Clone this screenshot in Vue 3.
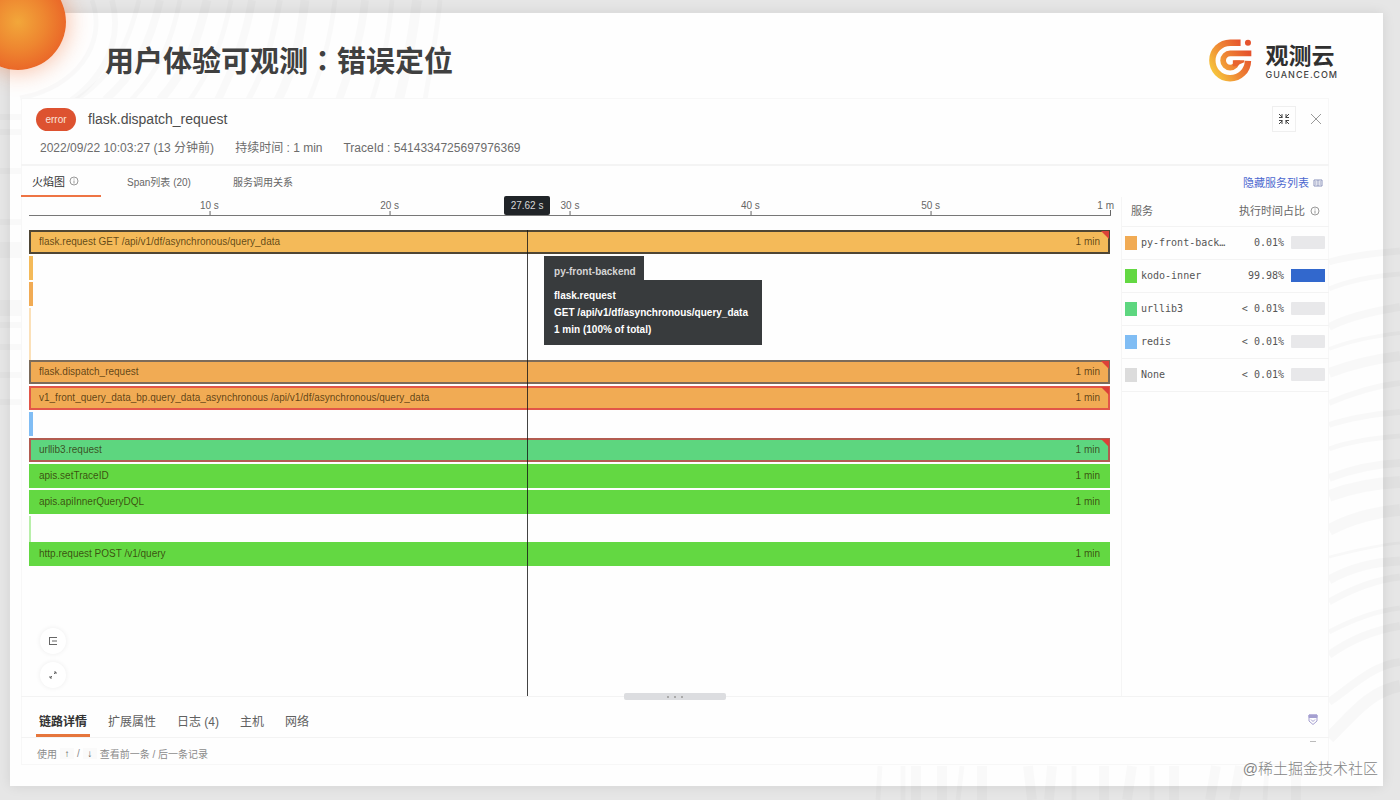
<script setup>
import { ref } from 'vue'

const ticks = [
  { label: '10 s', at: 16.67 },
  { label: '20 s', at: 33.33 },
  { label: '30 s', at: 50 },
  { label: '40 s', at: 66.67 },
  { label: '50 s', at: 83.33 },
]

const cursor = 46.03

const spans = [
  { name: 'flask.request GET /api/v1/df/asynchronous/query_data', kind: 'amber', edge: 'dark', error: true },
  { kind: 'amber', sliver: true },
  { kind: 'orange', sliver: true },
  { kind: 'pale', sliver: true },
  { kind: 'pale', sliver: true },
  { name: 'flask.dispatch_request', kind: 'orange', edge: 'grey', error: true },
  { name: 'v1_front_query_data_bp.query_data_asynchronous /api/v1/df/asynchronous/query_data', kind: 'orange', edge: 'red', error: true },
  { kind: 'blue', sliver: true },
  { name: 'urllib3.request', kind: 'mint', edge: 'red', error: true },
  { name: 'apis.setTraceID', kind: 'green' },
  { name: 'apis.apiInnerQueryDQL', kind: 'green' },
  { kind: 'lime', sliver: true },
  { name: 'http.request POST /v1/query', kind: 'green' },
]

const services = [
  { name: 'py-front-back…', kind: 'orange', share: '0.01%', fill: 0 },
  { name: 'kodo-inner', kind: 'green', share: '99.98%', fill: 100 },
  { name: 'urllib3', kind: 'mint', share: '< 0.01%', fill: 0 },
  { name: 'redis', kind: 'blue', share: '< 0.01%', fill: 0 },
  { name: 'None', kind: 'none', share: '< 0.01%', fill: 0 },
]

const views = ['火焰图', 'Span列表 (20)', '服务调用关系']
const view = ref(0)
const details = ['链路详情', '扩展属性', '日志 (4)', '主机', '网络']
const detail = ref(0)
</script>

<template>
  <div class="stage">
    <main class="slide">
      <svg class="ripples" viewBox="0 0 1400 800" preserveAspectRatio="none" aria-hidden="true">
        <g fill="none" stroke="#000" stroke-opacity=".02">
          <path stroke-width="5" d="M92 0C108 45 75 88 20 98" />
          <path stroke-width="6" d="M112 0C124 45 100 92 40 118" />
          <path stroke-width="5" d="M139 0C128 45 114 75 76 100" />
          <path stroke-width="8" d="M160 0C150 45 134 75 105 100" />
          <path stroke-width="5" d="M180 0C172 40 160 70 131 100" />
          <path stroke-width="9" d="M207 0C198 40 188 68 160 100" />
          <path stroke-width="5" d="M231 0C223 42 212 68 190 100" />
          <path stroke-width="8" d="M252 0C245 42 233 68 218 100" />
          <path stroke-width="6" d="M280 0C272 42 266 68 248 100" />
          <path stroke-width="9" d="M305 0C300 42 294 68 278 100" />
          <path stroke-width="5" d="M335 0C330 42 322 68 309 100" />
          <path stroke-width="8" d="M365 0C361 42 350 68 339 100" />
          <path stroke-width="5" d="M392 0C388 42 382 68 372 100" />
          <path stroke-width="10" d="M417 0C412 42 407 68 399 100" />
          <path stroke-width="5" d="M440 0C437 35 430 68 425 100" />
        </g>
        <g fill="none" stroke="#000" stroke-opacity=".024">
          <path stroke-width="7" d="M1329 262C1350 256 1375 253 1400 251" />
          <path stroke-width="5" d="M1329 289C1350 280 1375 276 1400 274" />
          <path stroke-width="8" d="M1329 327C1350 316 1375 311 1400 307" />
          <path stroke-width="4" d="M1329 349C1350 341 1375 336 1400 333" />
          <path stroke-width="10" d="M1329 373C1350 365 1375 359 1400 356" />
          <path stroke-width="6" d="M1329 403C1350 394 1375 386 1400 383" />
          <path stroke-width="6" d="M1329 425C1350 418 1375 414 1400 412" />
          <path stroke-width="5" d="M1329 449C1350 441 1375 438 1400 436" />
          <path stroke-width="8" d="M1329 478C1350 470 1375 464 1400 463" />
          <path stroke-width="12" d="M1329 496C1350 488 1375 483 1400 482" />
          <path stroke-width="12" d="M1329 530C1350 519 1375 512 1400 510" />
          <path stroke-width="3" d="M1329 557C1350 552 1375 545 1400 543" />
          <path stroke-width="9" d="M1329 580C1350 568 1375 562 1400 561" />
          <path stroke-width="7" d="M1329 602C1350 590 1375 580 1400 577" />
          <path stroke-width="5" d="M1329 632C1350 621 1375 611 1400 608" />
          <path stroke-width="8" d="M1329 655C1350 640 1375 630 1400 626" />
          <path stroke-width="8" d="M1329 702C1350 688 1372 665 1400 662" />
          <path stroke-width="12" d="M1329 738C1350 718 1368 692 1400 686" />
        </g>
        <g stroke="#000" stroke-opacity=".02">
          <path stroke-width="5" d="M880 766l-2 34M903 766v34M962 766l-4 34M1074 766v34M1152 766v34M1267 766l-2 34" />
          <path stroke-width="10" d="M916 766v34M942 766v34M982 766v34M1028 766l4 34M1052 766l-3 34M1104 766v34M1132 766l-5 34M1174 766v34M1216 766l-6 34M1240 766l-6 34M1296 766v34" />
          <path stroke-width="6" d="M0 117h21M0 132h21M0 171h21M0 222h21M0 325h21M0 347h21M0 375h21M0 402h21" />
          <path stroke-width="16" d="M0 250h21M0 308h21" />
        </g>
      </svg>

      <header class="slide-head">
        <h1>用户体验可观测<span class="colon">：</span>错误定位</h1>
        <div class="brand">
          <svg class="brand-mark" viewBox="332 117 128 128" aria-hidden="true">
            <defs>
              <linearGradient id="flame" gradientUnits="userSpaceOnUse" x1="345" y1="215" x2="445" y2="150">
                <stop offset="0" stop-color="#f6c33c" />
                <stop offset=".45" stop-color="#ef8a35" />
                <stop offset="1" stop-color="#e5532d" />
              </linearGradient>
            </defs>
            <g fill="none" stroke="url(#flame)">
              <path stroke-width="19" d="M426 128H395A53 53 0 1 0 448 182" />
              <path stroke-width="17" d="M458 160H395A21 21 0 1 0 416 181" />
            </g>
            <path d="M403 180h34v6l-14 6-8 6h-12z" fill="#e8642f" />
            <circle cx="448" cy="128" r="9" fill="#e5532d" />
          </svg>
          <div class="brand-text">
            <strong>观测云</strong>
            <span>GUANCE.COM</span>
          </div>
        </div>
      </header>

      <section class="panel">
        <div class="trace-head">
          <div class="trace-title">
            <span class="badge">error</span>
            <h2>flask.dispatch_request</h2>
            <div class="window-actions">
              <button type="button" class="boxed" aria-label="Collapse">
                <svg viewBox="0 0 12 12"><path d="M4 1v3.500H1M8 1v3.500H11M4 11V7.500H1M8 11V7.500H11M1 1l3.500 3.500M11 1L7.500 4.500M1 11l3.500-3.500M11 11L7.500 7.500" /></svg>
              </button>
              <button type="button" class="close" aria-label="Close">
                <svg viewBox="0 0 12 12"><path d="M1 1l10 10M11 1L1 11" /></svg>
              </button>
            </div>
          </div>
          <div class="trace-meta">
            <span>2022/09/22 10:03:27 (13 分钟前)</span>
            <span>持续时间 : 1 min</span>
            <span>TraceId : 5414334725697976369</span>
          </div>
        </div>

        <div class="view-bar">
          <nav class="views">
            <button v-for="(v, i) in views" :key="v" type="button" :class="{ active: view === i }" @click="view = i">
              {{ v }}
              <svg v-if="i === 0" class="info" viewBox="0 0 10 10"><circle cx="5" cy="5" r="4" /><path d="M5 4.500V7.500M5 2.500v1" /></svg>
            </button>
          </nav>
          <a class="toggle" href="#">隐藏服务列表
            <svg viewBox="0 0 10 10"><path d="M1 2h8v6H1zM5 2v6M6.500 4H8M6.500 6H8M2 4h1.500M2 6h1.500" /></svg>
          </a>
        </div>

        <div class="content">
          <div class="chart">
            <div class="axis">
              <span v-for="t in ticks" :key="t.label" class="tick" :style="{ left: t.at + '%' }">{{ t.label }}</span>
              <span class="tick-end">1 m</span>
              <span class="cursor-label" :style="{ left: cursor + '%' }">27.62 s</span>
            </div>
            <div class="flame">
              <div v-for="(s, i) in spans" :key="i" class="span" :class="[s.kind, s.edge && 'edge-' + s.edge, { sliver: s.sliver }]">
                <template v-if="!s.sliver">
                  <span>{{ s.name }}</span><span>1 min</span>
                </template>
                <i v-if="s.error" class="corner"></i>
              </div>
              <div class="cursor-line" :style="{ left: cursor + '%' }"></div>
              <div class="tip">
                <div class="tip-name">py-front-backend</div>
                <div class="tip-body">
                  <div>flask.request</div>
                  <div>GET /api/v1/df/asynchronous/query_data</div>
                  <div>1 min (100% of total)</div>
                </div>
              </div>
              <div class="tools">
                <button type="button" aria-label="Legend">
                  <svg viewBox="0 0 10 10"><path d="M1 1.500h8M1 8.500h8M4 5h5M1.500 1.500v7" /></svg>
                </button>
                <button type="button" aria-label="Expand">
                  <svg viewBox="0 0 10 10"><path d="M6 4l2-2M8 4V2H6M4 6L2 8M2 6v2h2" /></svg>
                </button>
              </div>
            </div>
          </div>

          <aside class="side">
            <table>
              <colgroup>
                <col class="col-service" />
                <col class="col-share" />
                <col />
              </colgroup>
              <thead>
                <tr>
                  <th>服务</th>
                  <th colspan="2" class="share-head">执行时间占比
                    <svg class="info" viewBox="0 0 10 10"><circle cx="5" cy="5" r="4" /><path d="M5 4.500V7.500M5 2.500v1" /></svg>
                  </th>
                </tr>
              </thead>
              <tbody>
                <tr v-for="s in services" :key="s.name">
                  <td class="service"><div><i :class="s.kind"></i><span>{{ s.name }}</span></div></td>
                  <td class="share">{{ s.share }}</td>
                  <td class="meter"><div><b :style="{ width: s.fill + '%' }"></b></div></td>
                </tr>
              </tbody>
            </table>
          </aside>
          <div class="handle"><i></i><i></i><i></i></div>
        </div>

        <div class="detail-bar">
          <nav class="details">
            <button v-for="(d, i) in details" :key="d" type="button" :class="{ active: detail === i }" @click="detail = i">{{ d }}</button>
          </nav>
          <svg class="shield" viewBox="0 0 10 12"><path class="shield-top" d="M1 1h8v2.500H1z" /><path d="M1 1h8v6L5 10.500 1 7zM3 5.500l2 2 2-2" /></svg>
        </div>
        <div class="hint">
          <span>使用</span><kbd>↑</kbd><span>/</span><kbd>↓</kbd><span>查看前一条 / 后一条记录</span>
          <i class="dash"></i>
        </div>
      </section>
      <div class="watermark">@稀土掘金技术社区</div>
    </main>
    <div class="sun"></div>
  </div>
</template>

<style>
body {
  margin: 0;
  background: #e6e6e6;
}
</style>

<style scoped>
* {
  box-sizing: border-box;
}
.stage {
  position: relative;
  display: flex;
  min-height: 100vh;
  padding: 13px 17px 14px 10px;
  overflow: hidden;
  background: #e6e6e6;
  color: #555;
  font-family: "Liberation Sans", "Noto Sans CJK SC", sans-serif;
}
.slide {
  position: relative;
  display: flex;
  flex: 1;
  flex-direction: column;
  min-width: 0;
  padding: 0 54px 21px 11px;
  background: #fefefe;
  box-shadow: 0 0 12px rgba(0, 0, 0, 0.09);
}
.ripples {
  position: absolute;
  top: -13px;
  left: -10px;
  width: calc(100% + 27px);
  height: calc(100% + 27px);
}
.sun {
  position: absolute;
  top: -26px;
  left: -30px;
  width: 96px;
  height: 96px;
  border-radius: 50%;
  background: radial-gradient(circle at 50% 50%, #f2a73a 0, #ee8630 40%, #e95f26 80%, #e65624 100%);
  box-shadow: 0 0 22px 3px rgba(240, 110, 50, 0.4);
}
button {
  padding: 0;
  border: 0;
  background: none;
  color: inherit;
  font-family: inherit;
}
svg {
  display: block;
}
.slide-head {
  position: relative;
  display: flex;
  align-items: center;
  justify-content: space-between;
  height: 85px;
  padding: 8px 0 0 84px;
}
h1 {
  margin: 0;
  padding-top: 2px;
  color: #404040;
  font-size: 29px;
  font-weight: 700;
  line-height: 40px;
  white-space: nowrap;
}
.colon {
  font-family: "Noto Sans CJK TC", sans-serif;
}
.brand {
  display: flex;
  align-items: center;
  gap: 14px;
  margin-right: -9px;
  padding-top: 1px;
}
.brand-mark {
  width: 43px;
  height: 43px;
}
.brand-text {
  display: flex;
  flex-direction: column;
  color: #303030;
}
.brand-text strong {
  font-size: 23px;
  font-weight: 700;
  line-height: 28px;
}
.brand-text span {
  color: #444;
  font-family: Inter, sans-serif;
  font-size: 9px;
  font-weight: 500;
  letter-spacing: 1px;
  line-height: 9px;
}
.panel {
  position: relative;
  display: flex;
  flex: 1;
  flex-direction: column;
  min-width: 0;
  background: #fefefe;
  box-shadow: inset 0 0 0 1px #f7f7f7;
}
.trace-head {
  height: 68px;
  padding: 7px 12px 0 15px;
  border-bottom: 2px solid #f4f4f4;
}
.trace-title {
  display: flex;
  align-items: center;
  height: 28px;
}
.badge {
  width: 40px;
  border-radius: 12px;
  background: #dd5230;
  color: #fbe4dc;
  font-size: 10px;
  line-height: 23px;
  text-align: center;
}
h2 {
  margin: 0 0 0 12px;
  color: #4c4c4c;
  font-size: 14px;
  font-weight: 400;
}
.window-actions {
  display: flex;
  align-items: center;
  gap: 8px;
  margin-left: auto;
  margin-right: -11px;
}
.window-actions button {
  display: grid;
  place-items: center;
  width: 24px;
  height: 26px;
}
.window-actions .boxed {
  border: 1px solid #efefef;
  color: #444;
}
.window-actions .close {
  color: #999;
}
.window-actions svg {
  width: 12px;
  height: 12px;
  fill: none;
  stroke: currentColor;
}
.trace-meta {
  display: flex;
  gap: 21px;
  padding: 6px 0 0 4px;
  color: #6c6c6c;
  font-size: 12px;
  line-height: 18px;
}
.view-bar {
  display: flex;
  align-items: center;
  justify-content: space-between;
  height: 31px;
  padding-right: 6px;
}
.views {
  display: flex;
  align-self: stretch;
  gap: 26px;
}
.views button {
  display: flex;
  align-items: center;
  gap: 4px;
  color: #666;
  font-size: 10px;
}
.views button.active {
  padding: 0 22px 0 11px;
  border-bottom: 2px solid #ee7444;
  color: #333;
  font-size: 11px;
}
.views button + button {
  margin-right: 16px;
}
.info {
  width: 10px;
  height: 10px;
  fill: none;
  stroke: #999;
}
.toggle {
  display: flex;
  align-items: center;
  gap: 4px;
  padding-top: 2px;
  color: #4c68cf;
  font-size: 11px;
  line-height: 16px;
  text-decoration: none;
}
.toggle svg {
  width: 10px;
  height: 10px;
  fill: none;
  stroke: #8b93bb;
}
.content {
  position: relative;
  display: flex;
  flex: 1;
  border-bottom: 1px solid #f3f3f3;
}
.chart {
  display: flex;
  flex: 1;
  flex-direction: column;
  min-width: 0;
  margin: 0 10px 0 8px;
}
.axis {
  position: relative;
  height: 19px;
  border-bottom: 1px solid #777;
  color: #666;
  font-size: 10px;
  line-height: 18px;
}
.tick {
  position: absolute;
  bottom: 0;
  transform: translateX(-50%);
}
.tick::after {
  position: absolute;
  bottom: 0;
  left: 50%;
  width: 1px;
  height: 4px;
  background: #666;
  content: "";
}
.tick-end {
  position: absolute;
  right: -3px;
  white-space: nowrap;
}
.tick-end::after {
  position: absolute;
  right: 3px;
  bottom: 0;
  width: 1px;
  height: 5px;
  background: #666;
  content: "";
}
.cursor-label {
  position: absolute;
  bottom: 0;
  z-index: 2;
  width: 46px;
  border-radius: 2px;
  background: #202428;
  color: #d8d8d8;
  line-height: 19px;
  text-align: center;
  transform: translateX(-50%);
}
.flame {
  position: relative;
  display: flex;
  flex: 1;
  flex-direction: column;
  gap: 2px;
  padding: 14px 1px 130px 0;
}
.span {
  position: relative;
  display: flex;
  align-items: center;
  justify-content: space-between;
  height: 24px;
  padding: 0 10px 2px;
  color: rgba(45, 28, 0, 0.74);
  font-size: 10px;
  white-space: nowrap;
}
.amber { background: #f4ba59; }
.orange { background: #f1ab54; }
.pale { background: #fbe0b8; }
.blue { background: #80bdf4; }
.mint { background: #5dd67f; }
.green { background: #63d842; }
.lime { background: #b8efaa; }
.none { background: #dcdcdc; }
.edge-dark,
.edge-grey,
.edge-red {
  padding: 0 8px 2px;
  border: 2px solid #4f4634;
}
.edge-grey { border-color: #7c6b5a; }
.edge-red { border-color: #e25548; }
.mint.edge-red { border-color: #b25c50; }
.sliver {
  width: 4px;
  padding: 0;
}
.sliver.pale,
.sliver.lime {
  width: 2px;
  height: 26px;
  margin-bottom: -2px;
}
.corner {
  position: absolute;
  top: -1px;
  right: -1px;
  border-top: 8px solid #dc4038;
  border-left: 8px solid transparent;
}
.cursor-line {
  position: absolute;
  top: 14px;
  bottom: 0;
  width: 1px;
  background: rgba(20, 20, 20, 0.8);
}
.tip {
  position: absolute;
  top: 40px;
  left: 47.6%;
  color: #fff;
  font-size: 10px;
  font-weight: 700;
  line-height: 17px;
  white-space: nowrap;
}
.tip-name {
  width: max-content;
  padding: 7px 8px 0 10px;
  background: #383b3d;
  color: #d5d5d5;
}
.tip-body {
  padding: 7px 14px 7px 10px;
  background: #383b3d;
}
.tools {
  position: absolute;
  bottom: 8px;
  left: 11px;
  display: grid;
  gap: 8px;
}
.tools button {
  display: grid;
  place-items: center;
  width: 26px;
  height: 26px;
  border-radius: 50%;
  background: #fff;
  box-shadow: 0 0 5px rgba(0, 0, 0, 0.07);
}
.tools svg {
  width: 10px;
  height: 10px;
  fill: none;
  stroke: #666;
}
.side {
  width: 208px;
  border-left: 1px solid #f5f5f5;
}
table {
  width: 100%;
  border-collapse: collapse;
  table-layout: fixed;
}
.col-service {
  width: 110px;
}
.col-share {
  width: 52px;
}
th,
td {
  padding: 0;
  border-bottom: 1px solid #f3f3f3;
}
thead tr {
  height: 29px;
}
tbody tr {
  height: 33px;
}
th {
  padding-left: 9px;
  color: #666;
  font-size: 11px;
  font-weight: 400;
  line-height: 16px;
  text-align: left;
}
.share-head {
  padding-left: 7px;
}
.share-head .info {
  display: inline-block;
  margin-left: 2px;
  vertical-align: -1px;
}
td {
  color: #555;
  font-family: "DejaVu Sans Mono", monospace;
  font-size: 10px;
}
.service div {
  display: flex;
  align-items: center;
  gap: 4px;
  padding-left: 3px;
}
.service i {
  flex: none;
  width: 12px;
  height: 14px;
}
.share {
  text-align: right;
  white-space: nowrap;
}
.meter {
  padding-left: 7px;
}
.meter div {
  width: 34px;
  height: 13px;
  border-radius: 1px;
  background: #e8e8ea;
}
.meter b {
  display: block;
  height: 100%;
  background: #3268cd;
}
.handle {
  position: absolute;
  bottom: -4px;
  left: 50%;
  display: flex;
  align-items: center;
  justify-content: center;
  gap: 5px;
  width: 102px;
  height: 7px;
  border-radius: 2px;
  background: #dcdde0;
  transform: translateX(-50%);
}
.handle i {
  width: 2px;
  height: 2px;
  background: #aaa;
}
.detail-bar {
  display: flex;
  align-items: center;
  justify-content: space-between;
  height: 41px;
  padding-right: 11px;
  border-bottom: 1px solid #f3f3f3;
}
.details {
  display: flex;
  align-self: stretch;
  gap: 21px;
  padding: 6px 0 0 15px;
}
.details button {
  color: #606060;
  font-size: 12px;
}
.details button.active {
  padding: 3px 3px 0;
  margin-right: -3px;
  border-bottom: 3px solid #e6763c;
  color: #333;
  font-weight: 700;
}
.shield {
  width: 10px;
  height: 12px;
  margin-top: 6px;
  fill: none;
  stroke: #a49fd0;
}
.shield-top {
  fill: #a49fd0;
}
.hint {
  display: flex;
  align-items: center;
  gap: 3px;
  height: 27px;
  padding: 3px 13px 0 16px;
  color: #8b8b8b;
  font-size: 10px;
}
kbd {
  width: 14px;
  background: #fafafa;
  color: #555;
  font-family: "Liberation Sans", sans-serif;
  font-size: 10px;
  text-align: center;
}
.dash {
  align-self: flex-start;
  width: 6px;
  height: 1px;
  margin-left: auto;
  background: #bbb;
}
.watermark {
  position: absolute;
  right: 5px;
  bottom: 7px;
  color: #858585;
  font-size: 15px;
  font-weight: 300;
  line-height: 20px;
}
</style>
